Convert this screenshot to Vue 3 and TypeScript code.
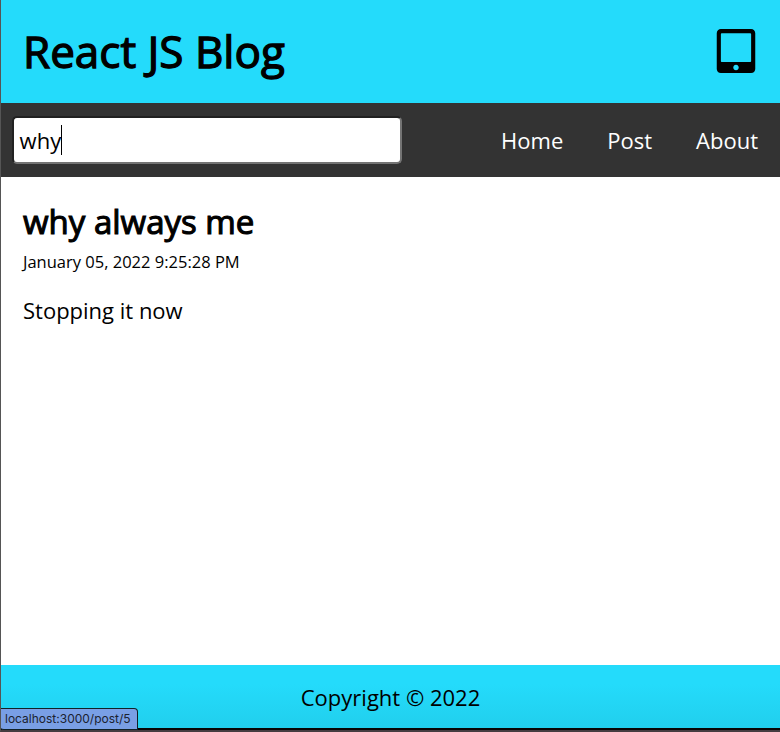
<script setup lang="ts">
import { ref } from 'vue'

interface Post {
  id: number
  title: string
  datetime: string
  body: string
}

const search = ref<string>('why')
const links: string[] = ['Home', 'Post', 'About']
const posts: Post[] = [
  { id: 5, title: 'why always me', datetime: 'January 05, 2022 9:25:28 PM', body: 'Stopping it now' },
]
</script>

<template>
  <div class="window">
    <header class="header">
      <h1 class="brand">React JS Blog</h1>
      <svg class="device" viewBox="0 0 448 512" aria-hidden="true">
        <path
          d="M400 0H48C21.5 0 0 21.5 0 48v416c0 26.5 21.5 48 48 48h352c26.5 0 48-21.5 48-48V48c0-26.5-21.5-48-48-48zM224 480c-17.7 0-32-14.3-32-32s14.3-32 32-32 32 14.3 32 32-14.3 32-32 32zm176-108c0 6.6-5.4 12-12 12H60c-6.6 0-12-5.4-12-12V60c0-6.6 5.4-12 12-12h328c6.6 0 12 5.4 12 12v312z"
        />
      </svg>
    </header>
    <nav class="nav">
      <div class="search"><span class="typed">{{ search }}</span><span class="caret"></span></div>
      <ul class="links">
        <li v-for="link in links" :key="link"><a>{{ link }}</a></li>
      </ul>
    </nav>
    <main class="feed">
      <article v-for="post in posts" :key="post.id">
        <h2 class="title">{{ post.title }}</h2>
        <p class="date">{{ post.datetime }}</p>
        <p class="body">{{ post.body }}</p>
      </article>
    </main>
    <footer class="footer"><p>Copyright © 2022</p></footer>
    <div class="status">localhost:3000/post/5</div>
  </div>
</template>

<style>
body {
  background: #453c40;
}
</style>

<style scoped>
.window {
  position: relative;
  box-sizing: border-box;
  height: 732px;
  border-left: 1px solid #555;
  border-bottom: 2px solid #453c40;
  display: flex;
  flex-direction: column;
  overflow: hidden;
  background: #fff;
  color: #000;
  font: 22px/30px "Open Sans", sans-serif;
}
h1, h2, p, ul {
  margin: 0;
  padding: 0;
}
.header {
  flex: 0 0 103px;
  box-sizing: border-box;
  padding: 0 24px 1px 22px;
  display: flex;
  align-items: center;
  justify-content: space-between;
  background: #24dbfb;
}
.brand {
  font-size: 44px;
  line-height: 60px;
  font-weight: 400;
  -webkit-text-stroke: 1.3px #000;
}
.device {
  width: 40px;
  height: 44px;
}
.nav {
  flex: 0 0 74px;
  box-sizing: border-box;
  padding: 0 22px 0 11px;
  display: flex;
  align-items: center;
  justify-content: space-between;
  background: #333;
}
.search {
  box-sizing: border-box;
  width: 390px;
  height: 48px;
  padding: 0 5.6px;
  display: flex;
  align-items: center;
  border: 2px solid;
  border-color: #212121 #747474 #747474 #212121;
  border-radius: 5px;
  background: #fff;
}
.caret {
  width: 1px;
  height: 30px;
  margin: -1px 0 0 -0.6px;
  background: #000;
}
.links {
  display: flex;
  gap: 44px;
  list-style: none;
  color: #fff;
}
.feed {
  flex: 1;
  padding: 22px;
}
.title {
  font-size: 33px;
  line-height: 45px;
  font-weight: 400;
  -webkit-text-stroke: 1.1px #000;
}
.date {
  margin-top: 7px;
  font-size: 16.5px;
  line-height: 22px;
}
.body {
  margin-top: 22px;
}
.footer {
  flex: 0 0 65px;
  box-sizing: border-box;
  padding-top: 17px;
  border-bottom: 2px solid #080505;
  text-align: center;
  background: linear-gradient(#24dbfb 30%, #21cfed);
}
.status {
  position: absolute;
  left: -1px;
  bottom: 0;
  box-sizing: border-box;
  width: 138px;
  height: 22px;
  padding-left: 5px;
  border: solid #102127;
  border-width: 1px 1px 1px 0;
  border-radius: 0 4px 0 4px;
  background: #799fe5;
  color: #1b2230;
  font: 12px/20px Inter, sans-serif;
  white-space: nowrap;
}
</style>
